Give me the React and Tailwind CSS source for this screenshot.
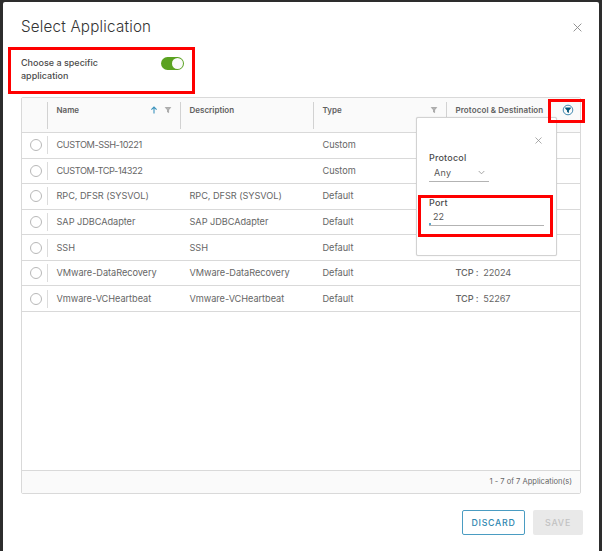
import React, { useState } from "react";

const applications = [
  { name: "CUSTOM-SSH-10221", description: "", type: "Custom", port: "" },
  { name: "CUSTOM-TCP-14322", description: "", type: "Custom", port: "" },
  { name: "RPC, DFSR (SYSVOL)", description: "RPC, DFSR (SYSVOL)", type: "Default", port: "" },
  { name: "SAP JDBCAdapter", description: "SAP JDBCAdapter", type: "Default", port: "" },
  { name: "SSH", description: "SSH", type: "Default", port: "" },
  { name: "VMware-DataRecovery", description: "VMware-DataRecovery", type: "Default", port: "22024" },
  { name: "Vmware-VCHeartbeat", description: "Vmware-VCHeartbeat", type: "Default", port: "52267" },
];

const CloseIcon = ({ className }) => (
  <svg viewBox="0 0 10 10" className={className} fill="none" stroke="currentColor">
    <path d="M0.7 0.7 9.3 9.3M9.3 0.7 0.7 9.3" />
  </svg>
);

const FilterIcon = ({ className }) => (
  <svg viewBox="0 0 8 8" className={className} fill="none" stroke="currentColor">
    <path d="M1.3 1.5H6.7L4.6 3.9V6.6L3.5 6V3.9Z" strokeWidth="0.7" fill="#b4b4b4" />
  </svg>
);

const SortIcon = () => (
  <svg viewBox="0 0 8 8" className="h-2 w-2" fill="none" stroke="#3b93bd" strokeWidth="1.1">
    <path d="M4 7.5V1.2M1.4 3.7 4 1.1 6.6 3.7" />
  </svg>
);

const ActiveFilterIcon = () => (
  <svg viewBox="0 0 12 12" className="h-3 w-3" fill="none">
    <circle cx="6" cy="6" r="4.8" stroke="#2f7ea8" strokeWidth="0.9" />
    <path d="M3.2 3.6H8.8V4.4L6.9 6.4V9L5.1 8.1V6.4L3.2 4.4Z" fill="#00567a" />
  </svg>
);

const FilterPopover = ({ protocol, port, setPort }) => (
  <div className="absolute left-[-31px] top-[15px] z-10 h-[139px] w-[141px] rounded-[2px] border border-[#d2d2d2] bg-white px-3 shadow-[0_0_1px_rgba(0,0,0,0.2)]">
    <div className="flex justify-end pr-[2px] pt-[19px]">
      <CloseIcon className="h-[7px] w-[7px] text-[#888]" />
    </div>
    <div className="mt-[7px] text-[9px] font-medium leading-[14px] tracking-[0.2px] text-[#4b4b4b]">
      Protocol
    </div>
    <div className="flex h-[17px] w-[60px] items-start justify-between border-b border-[#b3b3b3] pl-[5px] pr-[4px] text-[9px] font-normal leading-[16px] tracking-[0.3px] text-[#565656]">
      {protocol}
      <svg viewBox="0 0 8 5" className="mt-[5px] h-[5px] w-[7px]" fill="none" stroke="#999">
        <path d="M0.8 0.8 4 4 7.2 0.8" />
      </svg>
    </div>
    <div className="mt-[14px] text-[9px] font-medium leading-[14px] tracking-[0.2px] text-[#4b4b4b]">
      Port
    </div>
    <div className="flex h-[16px] w-[115px] border-b border-[#b3b3b3]">
      <span className="mt-[13px] h-[2px] w-[2px] bg-[#5fa8cc]"></span>
      <input
        value={port}
        onChange={(e) => setPort(e.target.value)}
        className="h-[14px] w-[100px] pl-[2px] text-[9px] font-normal leading-[14px] text-[#565656] outline-none"
      />
    </div>
  </div>
);

const App = () => {
  const [selected, setSelected] = useState("");
  const [port, setPort] = useState("22");

  return (
    <div className="relative h-[551px] w-[602px] overflow-hidden bg-[#2d2d2d] pl-[3px] pr-[3px] pt-[2px] font-['Inter','Liberation_Sans',sans-serif]">
      <div className="flex h-[549px] flex-col rounded-t-[2px] bg-white pl-[18px] pr-[18px]">
        {/* Title */}
        <div className="flex items-center justify-between pr-0 pt-[13px]">
          <h1 className="text-[15.2px] font-light leading-[24px] tracking-[0.2px] text-[#333]">
            Select Application
          </h1>
          <CloseIcon className="mr-[-1px] h-[9px] w-[9px] text-[#888]" />
        </div>

        {/* Toggle */}
        <div className="flex h-[58px] pt-[18px]">
          <div className="w-[140px] pr-[50px] text-[9px] font-medium leading-[12.5px] tracking-[0px] text-[#4b4b4b]">
            Choose a specific application
          </div>
          <div className="flex h-[13px] w-[23px] items-center justify-end rounded-full bg-[#5aa220] pr-px">
            <span className="h-[11px] w-[11px] rounded-full bg-[#fafafa]"></span>
          </div>
        </div>

        {/* Data grid */}
        <div className="flex h-[397px] w-[560px] shrink-0 flex-col rounded-[2px] border border-[#d9d9d9] text-[#666]">
          <div className="flex h-[35px] shrink-0 border-b border-[#d9d9d9] bg-[#fafafa] pt-[4px] text-[8px] font-semibold leading-[16px] text-[#606060]">
            <div className="h-[27px] w-[26px] border-r border-[#d2d2d2]"></div>
            <div className="flex h-[27px] w-[133px] border-r border-[#d2d2d2] pl-[8.5px] pr-[8px]">
              <span className="grow">Name</span>
              <div className="flex gap-[6px] pt-[4px]">
                <SortIcon />
                <FilterIcon className="h-2 w-2 text-[#999]" />
              </div>
            </div>
            <div className="h-[27px] w-[133px] border-r border-[#d2d2d2] pl-[8.5px]">Description</div>
            <div className="flex h-[27px] w-[133px] justify-between border-r border-[#d2d2d2] pl-[8.5px] pr-[8px]">
              Type
              <FilterIcon className="mt-[4px] h-2 w-2 text-[#999]" />
            </div>
            <div className="relative flex grow pl-[8.5px]">
              <span className="w-[106px] whitespace-nowrap tracking-[0.1px]">Protocol &amp; Destination</span>
              <div className="pt-[2px]">
                <ActiveFilterIcon />
              </div>
              <FilterPopover protocol="Any" port={port} setPort={setPort} />
            </div>
          </div>

          <div className="grow text-[9.2px] leading-[24px] tracking-[-0.05px]">
            {applications.map((app) => (
              <div
                key={app.name}
                onClick={() => setSelected(app.name)}
                className="flex h-[25.57px] items-center border-b border-[#d9d9d9]"
              >
                <div className="flex h-[18px] w-[26px] items-center border-r border-[#dcdcdc] pl-[8px]">
                  <span
                    className={`h-[12px] w-[12px] rounded-full border ${
                      selected === app.name ? "border-[#0079b8] bg-[#0079b8]" : "border-[#b8b8b8]"
                    }`}
                  ></span>
                </div>
                <div className={`w-[133px] pl-[8.5px] ${app.type === "Custom" ? "tracking-[-0.42px]" : ""}`}>
                  {app.name}
                </div>
                <div className="w-[133px] pl-[8.5px]">{app.description}</div>
                <div className="w-[133px] pl-[8.5px]">{app.type}</div>
                {app.port && (
                  <div className="pl-[8.5px] tracking-[-0.15px]">
                    <span className="mr-[5px] font-medium">TCP :</span>
                    {app.port}
                  </div>
                )}
              </div>
            ))}
          </div>

          <div className="h-[23px] shrink-0 border-t border-[#d9d9d9] bg-[#fafafa] pr-[8px] text-right text-[7.6px] leading-[22px] tracking-[-0.02px]">
            1 - 7 of 7 Application(s)
          </div>
        </div>

        {/* Actions */}
        <div className="flex justify-end gap-2 pt-[16px]">
          <button className="h-[25px] w-[63px] rounded-[2px] border border-[#4a9cc2] text-[8.8px] font-medium tracking-[0.7px] text-[#2f87b0]">
            DISCARD
          </button>
          <button className="mr-[-2px] h-[25px] w-[50px] rounded-[2px] bg-[#e9e9e9] text-[8.8px] font-medium tracking-[0.8px] text-[#c2c2c2]">
            SAVE
          </button>
        </div>
      </div>

      {/* Highlights */}
      <div className="pointer-events-none absolute left-[8px] top-[47px] h-[47px] w-[187px] border-3 border-[#fe0000]"></div>
      <div className="pointer-events-none absolute left-[548px] top-[99px] z-20 h-[24px] w-[37px] border-3 border-[#fe0000]"></div>
      <div className="pointer-events-none absolute left-[418px] top-[195px] z-20 h-[42px] w-[135px] border-3 border-[#fe0000]"></div>
    </div>
  );
};

export default App;
